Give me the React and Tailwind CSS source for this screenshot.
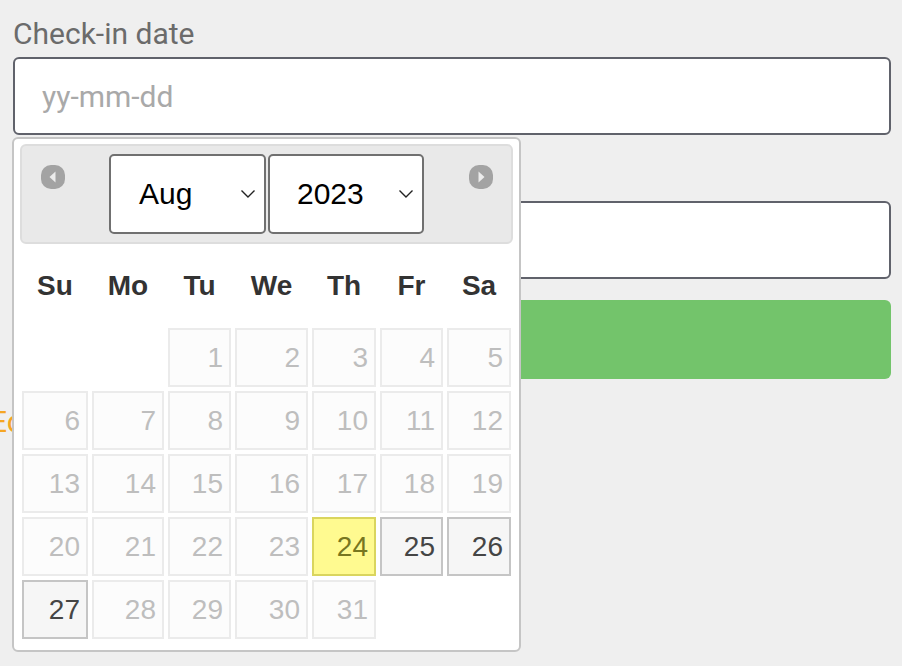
import React from "react";

const COLS = "grid grid-cols-[66px_72px_63px_73px_64px_63px_64px] gap-x-[4px]";

function NavIcon({ dir }) {
  return (
    <svg width="26" height="26" viewBox="0 0 26 26" className="blur-[0.6px]">
      <rect x="1" y="1" width="24" height="24" rx="10" fill="#a3a3a3" />
      {dir === "prev" ? (
        <polygon points="15.5,7.5 15.5,18.5 9.5,13" fill="#ececec" />
      ) : (
        <polygon points="10.5,7.5 10.5,18.5 16.5,13" fill="#ececec" />
      )}
    </svg>
  );
}

function FakeSelect({ value, w, pl }) {
  return (
    <div
      className={`flex h-[80px] items-center justify-between rounded-[5px] border-2 border-[#707070] bg-white pr-[8px] text-[30px] text-black ${w} ${pl}`}
    >
      <span className="leading-none">{value}</span>
      <svg width="16" height="10" viewBox="0 0 16 10">
        <path d="M1.5 1.5 L8 8 L14.5 1.5" fill="none" stroke="#222" strokeWidth="1.4" />
      </svg>
    </div>
  );
}

function Day({ n }) {
  if (n === null) return <div className="h-[59px]" />;
  let cls = "border-[#ebebeb] bg-[#fcfcfc] text-[#bebebe]";
  if (n === 24) cls = "border-[#dad55e] bg-[#fffa90] text-[#777620]";
  else if (n === 25 || n === 26 || n === 27) cls = "border-[#c5c5c5] bg-[#f6f6f6] text-[#454545]";
  return (
    <div className={`flex h-[59px] items-center justify-end border-2 pr-[6px] text-[28px] leading-none ${cls}`}>
      {n}
    </div>
  );
}

export default function App() {
  const days = [null, null];
  for (let i = 1; i <= 31; i++) days.push(i);
  while (days.length < 35) days.push(null);
  const names = ["Su", "Mo", "Tu", "We", "Th", "Fr", "Sa"];

  return (
    <div className="relative min-h-[666px] overflow-hidden bg-[#efefef] pl-[13px] pr-[11px] font-['Roboto',sans-serif]">
      <div className="pt-[16px]">
        <div className="h-[36px] text-[30px] leading-[36px] text-[#6b6b6b]">Check-in date</div>
        <div className="mt-[5px] flex h-[78px] items-center rounded-[6px] border-2 border-[#60626b] bg-white pl-[27px] text-[30px] text-[#a9a9a9]">
          yy-mm-dd
        </div>
      </div>
      <div className="pt-[25px]">
        <div className="h-[36px]" />
        <div className="mt-[5px] h-[78px] rounded-[6px] border-2 border-[#60626b] bg-white" />
      </div>
      <div className="mt-[21px] h-[79px] rounded-[6px] bg-[#73c46b]" />
      <div className="ml-[-23px] mt-[25px] h-[36px] text-[30px] leading-[36px] text-[#f5a623]">Edit</div>

      {/* Datepicker popup */}
      <div className="absolute left-[12px] top-[137px] w-[509px] rounded-[6px] border-2 border-[#c5c5c5] bg-white px-[6px] pb-[11px] pt-[5px] font-['Liberation_Sans',Arial,sans-serif]">
        <div className="relative flex h-[100px] justify-center gap-[2px] rounded-[6px] border-2 border-[#dddddd] bg-[#e9e9e9] pt-[8px]">
          <div className="absolute left-[18px] top-[18px]">
            <NavIcon dir="prev" />
          </div>
          <div className="absolute right-[17px] top-[18px]">
            <NavIcon dir="next" />
          </div>
          <FakeSelect value="Aug" w="w-[157px]" pl="pl-[28px]" />
          <FakeSelect value="2023" w="w-[156px]" pl="pl-[27px]" />
        </div>
        <div className="ml-[2px]">
          <div className={`${COLS} h-[84px] items-center`}>
            {names.map((d) => (
              <div key={d} className="text-center text-[28px] font-bold leading-none text-[#333333]">
                {d}
              </div>
            ))}
          </div>
          <div className={`${COLS} gap-y-[4px]`}>
            {days.map((n, i) => (
              <Day key={i} n={n} />
            ))}
          </div>
        </div>
      </div>
    </div>
  );
}
